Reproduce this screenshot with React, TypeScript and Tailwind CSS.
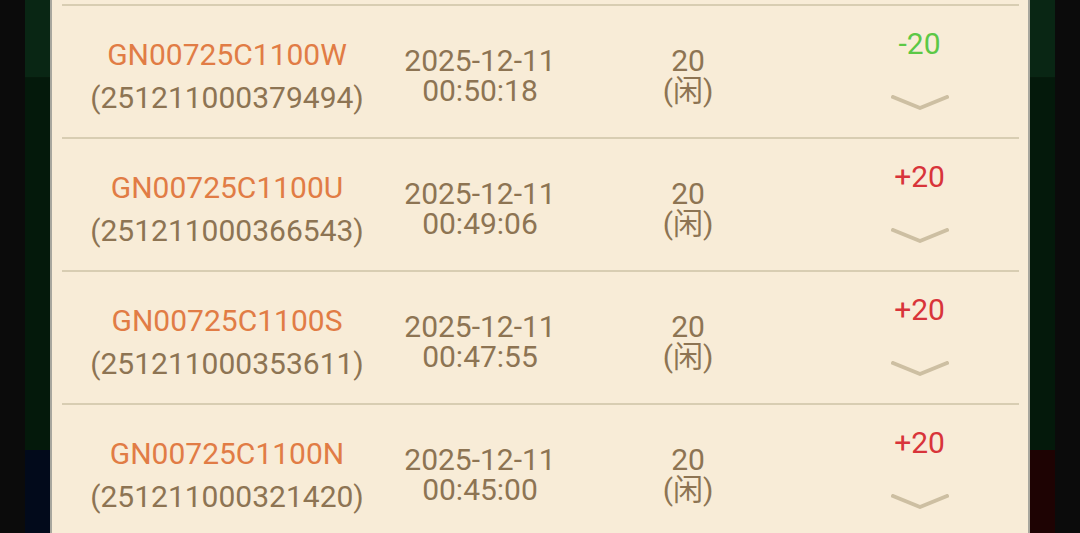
interface Bet {
  code: string,
  id: string,
  date: string,
  time: string,
  amount: string,
  result: string,
  win: boolean,
}

const bets: Bet[] = [
  { code: "GN00725C1100W", id: "(251211000379494)", date: "2025-12-11", time: "00:50:18", amount: "20", result: "-20", win: false },
  { code: "GN00725C1100U", id: "(251211000366543)", date: "2025-12-11", time: "00:49:06", amount: "20", result: "+20", win: true },
  { code: "GN00725C1100S", id: "(251211000353611)", date: "2025-12-11", time: "00:47:55", amount: "20", result: "+20", win: true },
  { code: "GN00725C1100N", id: "(251211000321420)", date: "2025-12-11", time: "00:45:00", amount: "20", result: "+20", win: true },
];

function Chevron(){
  return(
    <svg width="62" height="20" viewBox="0 0 62 20" className="blur-[0.7px]">
      <polyline points="4,5 31,16 58,5" fill="none" stroke="#cdbfa2" strokeWidth="4" strokeLinecap="round" strokeLinejoin="round" />
    </svg>
  )
}

function Row({ bet } : { bet: Bet }){
  return(
    <div className="flex flex-col">
      <div className="h-[2px] bg-[#d8cdb2]" />
      <div className="flex h-[131px] text-[30px] text-[#8d7453]">
        <div className="w-[330px] pt-[27px] flex flex-col items-center leading-[43px]">
          <span className="text-[#e17c45]">{bet.code}</span>
          <span>{bet.id}</span>
        </div>
        <div className="w-[176px] pt-[40px] flex flex-col items-center leading-[30px]">
          <span>{bet.date}</span>
          <span>{bet.time}</span>
        </div>
        <div className="w-[240px] pt-[40px] flex flex-col items-center leading-[30px]">
          <span>{bet.amount}</span>
          <span>(闲)</span>
        </div>
        <div className="flex-1 pl-[12px] pt-[23px] flex flex-col items-center leading-[30px]">
          <span className={bet.win ? "text-[#d8343a]" : "text-[#5cc846]"}>{bet.result}</span>
          <div className="mt-[33px]">
            <Chevron />
          </div>
        </div>
      </div>
    </div>
  )
}

export default function App(){
  return(
    <div className="flex h-[533px] w-[1080px] overflow-hidden bg-[#0b0b0b]" style={{ fontFamily: "Roboto, 'Noto Sans CJK SC', sans-serif" }}>
      <div className="w-[25px]" />
      <div className="w-[25px] flex flex-col">
        <div className="h-[78px] bg-[#092614] border-b border-[#061a0c]" />
        <div className="flex-1 bg-[#04190b]" />
        <div className="h-[83px] bg-[#020a1b]" />
      </div>
      <div className="flex-1 bg-[#f8ecd7] border-l-2 border-r-2 border-[#a8a79e] pl-[10px] pr-[9px] pt-[4px] flex flex-col">
        {bets.map((bet) => (
          <Row key={bet.id} bet={bet} />
        ))}
      </div>
      <div className="w-[25px] flex flex-col">
        <div className="h-[78px] bg-[#092614] border-b border-[#061a0c]" />
        <div className="flex-1 bg-[#04190b]" />
        <div className="h-[83px] bg-[#1e0303]" />
      </div>
      <div className="w-[25px]" />
    </div>
  )
}
